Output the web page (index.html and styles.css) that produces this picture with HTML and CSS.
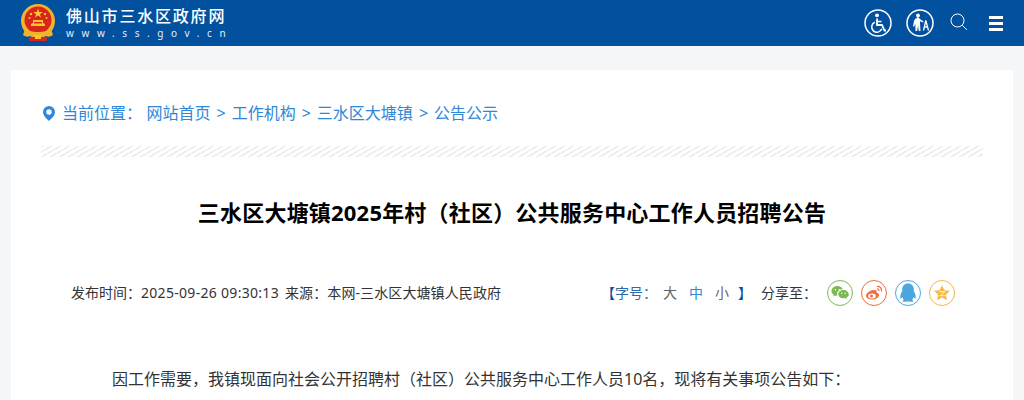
FILE: index.html
```html
<!DOCTYPE html>
<html lang="zh-CN">
<head>
  <meta charset="UTF-8">
  <title>三水区大塘镇2025年村（社区）公共服务中心工作人员招聘公告</title>
  <link rel="stylesheet" href="styles.css">
</head>
<body>

  <div class="top-bar">
    <div class="logo">
      <svg class="emblem" width="36" height="38" viewBox="0 0 36 38">
        <circle cx="18" cy="17" r="17" fill="#f0b429"/>
        <circle cx="18" cy="16" r="13.5" fill="#d9261c"/>
        <polygon points="18,4.5 19.2,8 22.8,8 19.9,10.2 21,13.6 18,11.5 15,13.6 16.1,10.2 13.2,8 16.8,8" fill="#f7c531"/>
        <circle cx="11" cy="10" r="1.2" fill="#f7c531"/>
        <circle cx="25" cy="10" r="1.2" fill="#f7c531"/>
        <circle cx="9.500" cy="14" r="1" fill="#f7c531"/>
        <circle cx="26.500" cy="14" r="1" fill="#f7c531"/>
        <path d="M11 22h14v-2l-2-1v-3h-10v3l-2 1z" fill="#f7c531"/>
        <rect x="14" y="18" width="8" height="1.500" fill="#d9261c"/>
        <path d="M5 25c4 4 22 4 26 0l2 6c-3 2-5 2-7 1h-16c-2 1-4 1-7-1z" fill="#f0b429"/>
        <rect x="9" y="33" width="18" height="4" rx="1" fill="#d9261c"/>
        <rect x="15" y="31" width="6" height="4" fill="#f7c531"/>
      </svg>
      <div class="logo-text">
        <div class="site-name">佛山市三水区政府网</div>
        <div class="site-url">www.ss.gov.cn</div>
      </div>
    </div>
    <div class="top-tools">
      <svg class="tool" width="28" height="28" viewBox="0 0 28 28" fill="none" stroke="#fff">
        <circle cx="14" cy="14" r="13" stroke-width="1.500"/>
        <circle cx="13" cy="6.300" r="1.900" fill="#fff" stroke="none"/>
        <path d="M13 9.500v6.500h5l2.500 5.500h1.500" stroke-width="1.800"/>
        <path d="M13 12.500h4.500" stroke-width="1.500"/>
        <path d="M10.800 13.300a5.200 5.200 0 1 0 7 6.500" stroke-width="1.500"/>
      </svg>
      <svg class="tool" width="28" height="28" viewBox="0 0 28 28" fill="none" stroke="#fff">
        <circle cx="14" cy="14" r="13" stroke-width="1.500"/>
        <circle cx="12" cy="6.500" r="1.900" fill="#fff" stroke="none"/>
        <path d="M11 9c-2 .3-3.200 2.500-3.500 5.500l-.5 3h1.300l1-3 .2 7.500h1.700l.8-5 .8 5h1.700l-.5-8 .2-1.800 2.800 1.300.5-1-3.500-2.600c-.8-.9-1.500-1.400-2.500-1.900z" fill="#fff" stroke="none"/>
        <path d="M19.800 11.500l-2.300 10M19.800 11.500l2.700 10M18.300 18h3.300" stroke-width="1.300"/>
      </svg>
      <svg class="search" width="18" height="18" viewBox="0 0 18 18" fill="none" stroke="#fff" stroke-width="1">
        <circle cx="7.500" cy="7.500" r="6.500"/>
        <path d="M12.300 12.300l4.500 4.500"/>
      </svg>
      <div class="menu-icon"><span></span><span></span><span></span></div>
    </div>
  </div>

  <div class="page-card">
    <div class="crumbs">
      <svg class="pin" width="12" height="15" viewBox="0 0 12 15">
        <path fill-rule="evenodd" d="M6 0a6 6 0 0 1 6 6c0 3.500-3.500 6.500-6 9-2.500-2.500-6-5.500-6-9a6 6 0 0 1 6-6zm0 3.300a2.700 2.700 0 1 0 0 5.400 2.700 2.700 0 0 0 0-5.400z" fill="#2f87dc"/>
      </svg>
      <span class="here">当前位置：</span>
      <a>网站首页</a><i>&gt;</i><a>工作机构</a><i>&gt;</i><a>三水区大塘镇</a><i>&gt;</i><a>公告公示</a>
    </div>
    <div class="stripe"></div>

    <h1 class="art-title">三水区大塘镇2025年村（社区）公共服务中心工作人员招聘公告</h1>

    <div class="meta">
      <div class="meta-info">发布时间：<span class="date">2025-09-26 09:30:13</span><span class="source">来源：本网-三水区大塘镇人民政府</span></div>
      <div class="meta-tools">
        <div class="font-size">
          <b>【</b><span class="fs-label">字号：</span>
          <span class="fs">大</span><span class="fs on">中</span><span class="fs last">小</span>
          <b>】</b>
        </div>
        <span class="share-label">分享至：</span>
        <div class="share">
          <span class="share-btn wx">
            <svg width="18" height="16" viewBox="0 0 18 16" fill="#7cb856">
              <path d="M6.500 1C3 1 .5 3.200 .5 6c0 1.600.9 2.900 2.200 3.800L2.200 11.500l2-1.100c.7.200 1.400.3 2.100.3-.2-.5-.3-1-.3-1.500 0-2.800 2.600-4.900 5.800-4.900C11.200 2.600 9.100 1 6.500 1z"/>
              <path d="M17.500 9.200c0-2.300-2.300-4.100-5.100-4.100S7.300 6.900 7.300 9.200s2.300 4.100 5.100 4.100c.6 0 1.200-.1 1.700-.2l1.700.9-.4-1.500c1.500-.8 2.600-1.900 2.600-3.300z"/>
              <g fill="#fff"><circle cx="4.500" cy="4.800" r=".8"/><circle cx="8.500" cy="4.800" r=".8"/><circle cx="10.700" cy="8.300" r=".7"/><circle cx="14.200" cy="8.300" r=".7"/></g>
            </svg>
          </span>
          <span class="share-btn wb">
            <svg width="18" height="16" viewBox="0 0 18 16" fill="none">
              <path d="M7.500 5C4 6 .8 8.800 1 11c.2 2.500 3.500 4 7 3.500 3.500-.5 6-2.300 6-4.500 0-1.500-1.500-2-2.500-2.200.5-1.500 0-2.800-1.500-2.800-.8 0-1.800.3-2.500 0z" fill="#ec6f3d"/>
              <ellipse cx="7" cy="11" rx="3.800" ry="2.600" fill="#fff"/>
              <circle cx="6.500" cy="11" r="1.500" fill="#ec6f3d"/>
              <path d="M12 1.500c2.500-.5 5 1.500 4.500 5M12 4c1.200-.2 2.300.7 2 2.200" stroke="#ec6f3d" stroke-width="1.200"/>
            </svg>
          </span>
          <span class="share-btn qq">
            <svg width="18" height="20" viewBox="0 0 16 18" fill="#4ba6de">
              <path d="M8 .5c3.300 0 5.200 2.300 5.200 5.200v1.500c1 1.500 2 4 1.700 6.300-.3 1-1.200-.2-1.800-1-.2 1.200-.8 2-1.500 2.700.8.400 1.500.8 1.300 1.300-.2.500-2 .500-3.300.4-.5-.2-1.600-.2-1.600-.2s-1.100 0-1.600.2c-1.300.1-3.100.1-3.300-.4-.2-.5.5-.9 1.300-1.300-.7-.7-1.300-1.500-1.500-2.700-.6.8-1.500 2-1.800 1-.3-2.300.7-4.800 1.700-6.300V5.700C2.800 2.800 4.700.5 8 .5z"/>
            </svg>
          </span>
          <span class="share-btn fav">
            <svg width="18" height="18" viewBox="0 0 16 16">
              <polygon points="8,1 10.100,5.500 15,6.100 11.400,9.500 12.300,14.400 8,12 3.700,14.400 4.600,9.500 1,6.100 5.900,5.500" fill="#f5b942"/>
              <path d="M5.500 6.800h5l-4 3.500h4.500" stroke="#fbe6b5" stroke-width="1" fill="none"/>
            </svg>
          </span>
        </div>
      </div>
    </div>

    <p class="art-text">因工作需要，我镇现面向社会公开招聘村（社区）公共服务中心工作人员10名，现将有关事项公告如下：</p>
  </div>

</body>
</html>
```

FILE: styles.css
```css
html, body {
  height: 400px;
  overflow: hidden;
}
body {
  margin: 0;
  font-family: "Noto Sans", "Noto Sans CJK SC", sans-serif;
  background: #f5f6f7;
  color: #333;
}
.top-bar {
  height: 46px;
  background: #02519f;
  display: flex;
  justify-content: space-between;
  align-items: center;
  padding: 0 21px 0 20px;
}
.logo {
  display: flex;
  align-items: center;
  gap: 10px;
}
.emblem {
  display: block;
}
.site-name {
  color: #fff;
  font-size: 16px;
  line-height: 20px;
  font-weight: 500;
  letter-spacing: 1.8px;
}
.site-url {
  color: #e4edf6;
  font-size: 10px;
  line-height: 14px;
  letter-spacing: 7.6px;
  white-space: nowrap;
}
.top-tools {
  display: flex;
  align-items: center;
}
.tool {
  display: block;
  margin-right: 14px;
}
.search {
  display: block;
  margin: 0 0 2px 2px;
}
.menu-icon {
  width: 14px;
  margin-left: 21px;
  display: flex;
  flex-direction: column;
  gap: 3px;
}
.menu-icon span {
  height: 3px;
  background: #fff;
}
.page-card {
  box-sizing: border-box;
  margin: 24px 11px 0;
  background: #fff;
  padding: 30px 30px 0;
  height: 330px;
  overflow: hidden;
}
.crumbs {
  display: flex;
  align-items: center;
  font-size: 16px;
  line-height: 26px;
  color: #2f87d8;
  padding-left: 2px;
}
.pin {
  margin-right: 7px;
}
.here {
  margin-right: 4.5px;
}
.crumbs i {
  font-style: normal;
  margin: 0 6px;
}
.stripe {
  height: 11px;
  margin-top: 20px;
  background: repeating-linear-gradient(150deg, #ececec 0, #ececec 1.5px, #fff 1.5px, #fff 4.5px);
}
.art-title {
  margin: 40px 0 0;
  text-align: center;
  font-size: 22px;
  line-height: 30px;
  font-weight: 700;
  letter-spacing: 0.2px;
  color: #000;
}
.meta {
  display: flex;
  justify-content: space-between;
  align-items: center;
  margin-top: 53px;
  padding: 0 28px 0 30px;
  font-size: 14px;
  line-height: 26px;
}
.date {
  letter-spacing: 0.3px;
  margin-right: 6px;
}
.source {
  letter-spacing: 0.1px;
}
.meta-tools {
  display: flex;
  align-items: center;
}
.font-size {
  display: flex;
  align-items: center;
  color: #2b6aa6;
  margin-right: 9px;
}
.font-size b {
  font-weight: 400;
  color: #02519f;
}
.fs-label {
  margin-right: 6px;
}
.fs {
  color: #666;
  margin-right: 12px;
}
.fs.on {
  color: #2f87d8;
}
.fs.last {
  margin-right: 9px;
}
.share-label {
  margin-right: 10px;
}
.share {
  display: flex;
  gap: 8px;
}
.share-btn {
  width: 26px;
  height: 26px;
  box-sizing: border-box;
  border-radius: 50%;
  border: 1px solid;
  display: flex;
  align-items: center;
  justify-content: center;
}
.wx { border-color: #7cb856; }
.wb { border-color: #ec6f3d; }
.qq { border-color: #4ba6de; }
.fav { border-color: #f5b942; }
.art-text {
  margin: 59px 0 0;
  padding: 0 30px 0 71px;
  font-size: 16px;
  line-height: 28px;
}
```
